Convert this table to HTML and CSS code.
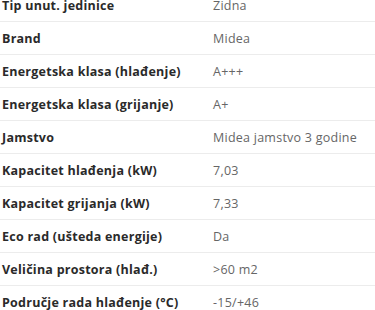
FILE: index.html
```html
<!DOCTYPE html>
<html lang="hr">
<head>
    <meta charset="UTF-8">
    <meta name="viewport" content="width=device-width, initial-scale=1.0">
    <title>Specifikacije</title>
    <link rel="stylesheet" href="styles.css">
</head>
<body>
    <div class="specs">
        <div class="spec-row"><span class="spec-label">Tip unut. jedinice</span><span class="spec-value">Zidna</span></div>
        <div class="spec-row"><span class="spec-label">Brand</span><span class="spec-value">Midea</span></div>
        <div class="spec-row"><span class="spec-label">Energetska klasa (hlađenje)</span><span class="spec-value">A+++</span></div>
        <div class="spec-row"><span class="spec-label">Energetska klasa (grijanje)</span><span class="spec-value">A+</span></div>
        <div class="spec-row"><span class="spec-label">Jamstvo</span><span class="spec-value">Midea jamstvo 3 godine</span></div>
        <div class="spec-row"><span class="spec-label">Kapacitet hlađenja (kW)</span><span class="spec-value">7,03</span></div>
        <div class="spec-row"><span class="spec-label">Kapacitet grijanja (kW)</span><span class="spec-value">7,33</span></div>
        <div class="spec-row"><span class="spec-label">Eco rad (ušteda energije)</span><span class="spec-value">Da</span></div>
        <div class="spec-row"><span class="spec-label">Veličina prostora (hlađ.)</span><span class="spec-value">&gt;60 m2</span></div>
        <div class="spec-row"><span class="spec-label">Područje rada hlađenje (°C)</span><span class="spec-value">-15/+46</span></div>
    </div>
</body>
</html>
```

FILE: styles.css
```css
body {
    margin: 0;
    padding: 0;
    font-family: "Open Sans", Arial, sans-serif;
    background: #fff;
    overflow: hidden;
}

/* list is scrolled a bit, first row sits half under the top edge */
.specs {
    margin-top: -11px;
}

.spec-row {
    display: grid;
    grid-template-columns: 211px 1fr;
    align-items: center;
    height: 32px;
    border-bottom: 1px solid #ececec;
    font-size: 12.5px;
    letter-spacing: 0.25px;
}

.spec-label {
    padding-left: 2px;
    font-weight: 700;
    color: #2a2a2a;
}

.spec-value {
    padding-left: 2px;
    color: #666;
}
```
